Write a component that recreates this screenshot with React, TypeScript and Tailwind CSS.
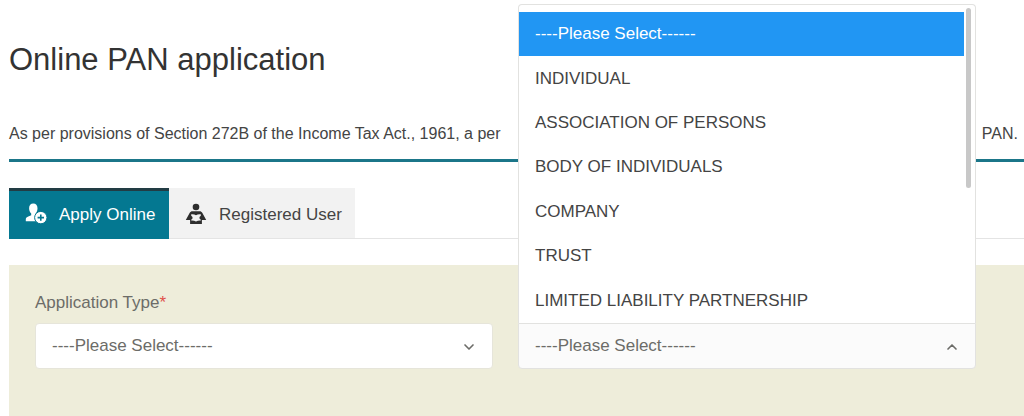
import { ChevronDown, ChevronUp } from 'lucide-react';

const categories = [
  '----Please Select------',
  'INDIVIDUAL',
  'ASSOCIATION OF PERSONS',
  'BODY OF INDIVIDUALS',
  'COMPANY',
  'TRUST',
  'LIMITED LIABILITY PARTNERSHIP',
];

function UserAddIcon() {
  return (
    <svg viewBox="0 1 22 22" className="w-[22px] h-[22px] overflow-visible" aria-hidden="true">
      <path
        fill="currentColor"
        d="M8.300 .5c2.600 0 4.200 1.900 4.200 4.700 0 2.100-.7 4-1.900 5.200v2.200l2.500 1.200-2 4.400H.8v-1.700c0-1.300.7-2.200 2-2.700l3.400-1.500v-1.900C4.900 9.200 4.100 7.300 4.100 5.200 4.100 2.400 5.700.5 8.300.5z"
      />
      <circle
        cx="15.800"
        cy="14.600"
        r="6.200"
        fill="currentColor"
        className="stroke-[#047891]"
        strokeWidth="1"
      />
      <path d="M15.800 11.400v6.400M12.600 14.600h6.400" className="stroke-[#047891]" strokeWidth="1.600" />
    </svg>
  );
}

function ReaderIcon() {
  return (
    <svg viewBox="0 1 22 22" className="w-[22px] h-[22px] overflow-visible" aria-hidden="true">
      <circle cx="11" cy="4" r="3.300" fill="currentColor" />
      <path
        fill="currentColor"
        d="M7.500 8.300h7c1.300 0 2.200.6 2.900 1.700l3.800 6.900h-4.300v4H5.100v-4H.8L4.600 10c.7-1.100 1.600-1.700 2.900-1.700z"
      />
      <path
        className="fill-[#f2f2f2]"
        d="M6.200 11.300c1.900-.2 3.600.1 4.800 1 1.200-.9 2.900-1.200 4.800-1v1.500l-1.300 1.200v1.500l1.300 1.200v.9c-1.800-.1-3.400.1-4.800.9-1.400-.8-3-1-4.800-.9v-.9l1.300-1.200V14l-1.300-1.200z"
      />
    </svg>
  );
}

export default function App() {
  return (
    <main className="min-h-screen flex flex-col pl-[9px] overflow-hidden bg-white text-[17px] leading-6 text-[#444] font-['Liberation_Sans',Arial,sans-serif]">
      <h1 className="pt-10 text-[31px] leading-10 text-[#333]">Online PAN application</h1>

      <p className="flex justify-between mt-[42px] pb-[13px] pr-1.5 border-b-3 border-[#1b7689] text-base leading-6">
        <span>As per provisions of Section 272B of the Income Tax Act., 1961, a per</span>
        <span>PAN.</span>
      </p>

      {/* Tabs */}
      <div role="tablist" className="flex h-[51px] mt-[26px] border-b border-[#e4e4e4]">
        <button
          role="tab"
          aria-selected="true"
          className="flex items-center gap-3 h-[51px] w-40 pl-4 border-t-3 border-[#223c44] bg-[#047891] text-white"
        >
          <UserAddIcon />
          Apply Online
        </button>
        <button
          role="tab"
          aria-selected="false"
          className="flex items-center gap-3 w-[186px] pl-4 border-t-3 border-[#f2f2f2] bg-[#f2f2f2]"
        >
          <span className="text-[#2e2e2e]">
            <ReaderIcon />
          </span>
          Registered User
        </button>
      </div>

      {/* Form */}
      <form className="grow grid grid-cols-2 content-start items-end gap-[25px] mt-[26px] pt-[26px] pb-12 pl-[26px] pr-12 bg-[#eeedda] text-[#6c6c68]">
        <div>
          <label htmlFor="application-type">
            Application Type<span className="text-[#e0524a]">*</span>
          </label>
          <div className="relative mt-2">
            <select
              id="application-type"
              className="block w-full h-[46px] px-4 appearance-none rounded border border-[#e6e5da] bg-white"
            >
              <option>----Please Select------</option>
            </select>
            <ChevronDown size={16} strokeWidth={2.5} className="absolute right-4 top-4 pointer-events-none" />
          </div>
        </div>

        <div className="relative">
          <select
            aria-label="Category"
            className="block w-full h-[46px] px-4 appearance-none rounded-b border border-[#e2e2e0] bg-[#fbfbfb]"
          >
            <option>----Please Select------</option>
          </select>
          <ChevronUp size={16} strokeWidth={2.5} className="absolute right-4 top-4 pointer-events-none" />

          {/* Opens upwards, over the page */}
          <div className="absolute bottom-full inset-x-0 flex pt-[7px] rounded-t border border-b-0 border-[#e2e2e0] bg-white">
            <ul role="listbox" aria-label="Category" className="grow flex flex-col h-[311px] text-[#444]">
              {categories.map((category, i) => (
                <li
                  key={category}
                  role="option"
                  aria-selected={i === 0}
                  className="flex-1 flex items-center px-4 aria-selected:bg-[#2196f3] aria-selected:text-white"
                >
                  {category}
                </li>
              ))}
            </ul>
            <div className="w-[5px] h-[180px] ml-0.5 mr-1 rounded-full bg-[#c8c8c8] -mt-1" />
          </div>
        </div>
      </form>
    </main>
  );
}
